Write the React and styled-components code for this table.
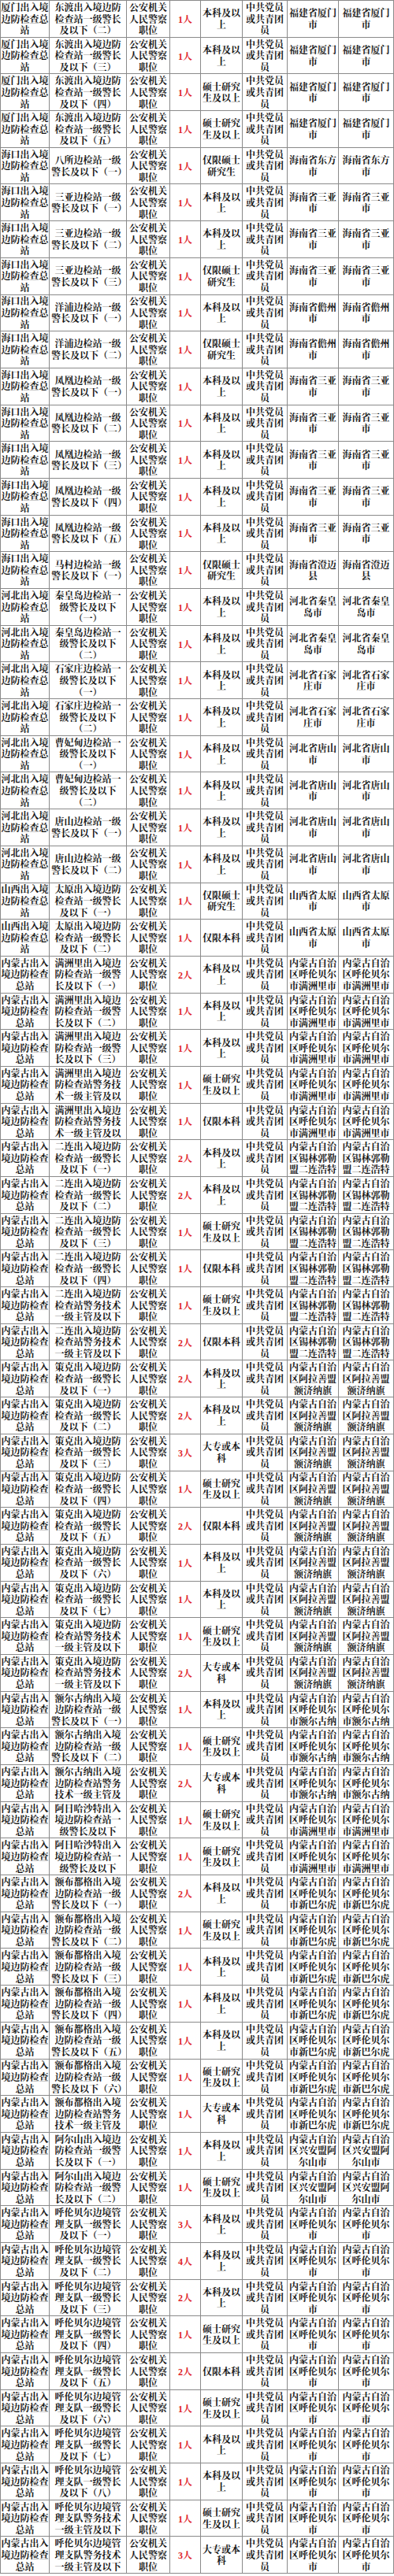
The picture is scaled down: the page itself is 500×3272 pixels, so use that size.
import React from "react";
import styled, { createGlobalStyle } from "styled-components";

const GlobalStyle = createGlobalStyle`
  html, body {
    margin: 0;
    padding: 0;
    background: #fff;
  }
`;

const Sheet = styled.div`
  display: grid;
  grid-template-columns: 62px 98px 55px 39px 53px 57px 65px 70px;
  grid-auto-rows: 46.7px;
  width: 500px;
  box-sizing: border-box;
  border-top: 1px solid #8a8a8a;
  border-left: 1px solid #8a8a8a;
  font-family: "Noto Serif CJK SC", "Noto Sans CJK SC", serif;
  font-size: 12px;
  font-weight: 700;
  color: #161616;
  background: #fff;
`;

const Cell = styled.div`
  display: flex;
  align-items: center;
  justify-content: center;
  box-sizing: border-box;
  border-right: 1px solid #8a8a8a;
  border-bottom: 1px solid #8a8a8a;
  padding: 0 ${(p) => (p.$tight ? 0 : 2)}px;
  overflow: hidden;
  text-align: center;
`;

// three lines at most, like the clipped cells of the source sheet
const Text = styled.div`
  line-height: 14.6px;
  padding: 1.5px 0;
  max-height: 43.8px;
  overflow: hidden;
  word-break: break-all;
`;

const Count = styled.span`
  color: #e0242b;
  font-family: "Liberation Serif", "Noto Serif CJK SC", "Noto Sans CJK SC", serif;
  font-size: 12px;
  font-weight: 700;
`;

const XM = "厦门出入境边防检查总站";
const HK = "海口出入境边防检查总站";
const HB = "河北出入境边防检查总站";
const SX = "山西出入境边防检查总站";
const NM = "内蒙古出入境边防检查总站";

const BK = "本科及以上";
const SS = "硕士研究生及以上";
const XS = "仅限硕士研究生";
const OB = "仅限本科";
const DZ = "大专或本科";

const jz = (s, n) => `${s}一级警长及以下${n ? `（${n}）` : ""}`;
const js = (s, n) => `${s}警务技术一级主管及以下（${n}）`;

const MZL = "内蒙古自治区呼伦贝尔市满洲里市";
const ELH = "内蒙古自治区锡林郭勒盟二连浩特市";
const EJN = "内蒙古自治区阿拉善盟额济纳旗";
const EEGN = "内蒙古自治区呼伦贝尔市额尔古纳市";
const XBEH = "内蒙古自治区呼伦贝尔市新巴尔虎左旗";
const AES = "内蒙古自治区兴安盟阿尔山市";
const HLBE = "内蒙古自治区呼伦贝尔市";

const rows = [
  [XM, jz("东渡出入境边防检查站", "二"), 1, BK, "福建省厦门市"],
  [XM, jz("东渡出入境边防检查站", "三"), 1, BK, "福建省厦门市"],
  [XM, jz("东渡出入境边防检查站", "四"), 1, SS, "福建省厦门市"],
  [XM, jz("东渡出入境边防检查站", "五"), 1, SS, "福建省厦门市"],
  [HK, jz("八所边检站", "一"), 1, XS, "海南省东方市"],
  [HK, jz("三亚边检站", "一"), 1, BK, "海南省三亚市"],
  [HK, jz("三亚边检站", "二"), 1, BK, "海南省三亚市"],
  [HK, jz("三亚边检站", "三"), 1, XS, "海南省三亚市"],
  [HK, jz("洋浦边检站", "一"), 1, BK, "海南省儋州市"],
  [HK, jz("洋浦边检站", "二"), 1, XS, "海南省儋州市"],
  [HK, jz("凤凰边检站", "一"), 1, BK, "海南省三亚市"],
  [HK, jz("凤凰边检站", "二"), 1, BK, "海南省三亚市"],
  [HK, jz("凤凰边检站", "三"), 1, BK, "海南省三亚市"],
  [HK, jz("凤凰边检站", "四"), 1, BK, "海南省三亚市"],
  [HK, jz("凤凰边检站", "五"), 1, BK, "海南省三亚市"],
  [HK, jz("马村边检站", "一"), 1, XS, "海南省澄迈县"],
  [HB, jz("秦皇岛边检站", "一"), 1, BK, "河北省秦皇岛市"],
  [HB, jz("秦皇岛边检站", "二"), 1, BK, "河北省秦皇岛市"],
  [HB, jz("石家庄边检站", "一"), 1, BK, "河北省石家庄市"],
  [HB, jz("石家庄边检站", "二"), 1, BK, "河北省石家庄市"],
  [HB, jz("曹妃甸边检站", "一"), 1, BK, "河北省唐山市"],
  [HB, jz("曹妃甸边检站", "二"), 1, BK, "河北省唐山市"],
  [HB, jz("唐山边检站", "一"), 1, BK, "河北省唐山市"],
  [HB, jz("唐山边检站", "二"), 1, BK, "河北省唐山市"],
  [SX, jz("太原出入境边防检查站", "一"), 1, XS, "山西省太原市"],
  [SX, jz("太原出入境边防检查站", "二"), 1, OB, "山西省太原市"],
  [NM, jz("满洲里出入境边防检查站", "一"), 2, BK, MZL],
  [NM, jz("满洲里出入境边防检查站", "二"), 1, BK, MZL],
  [NM, jz("满洲里出入境边防检查站", "三"), 1, BK, MZL],
  [NM, js("满洲里出入境边防检查站", "一"), 1, SS, MZL],
  [NM, js("满洲里出入境边防检查站", "二"), 1, OB, MZL],
  [NM, jz("二连出入境边防检查站", "一"), 2, BK, ELH],
  [NM, jz("二连出入境边防检查站", "二"), 2, BK, ELH],
  [NM, jz("二连出入境边防检查站", "三"), 1, SS, ELH],
  [NM, jz("二连出入境边防检查站", "四"), 1, OB, ELH],
  [NM, js("二连出入境边防检查站", "一"), 1, SS, ELH],
  [NM, js("二连出入境边防检查站", "二"), 2, OB, ELH],
  [NM, jz("策克出入境边防检查站", "一"), 2, BK, EJN],
  [NM, jz("策克出入境边防检查站", "二"), 2, BK, EJN],
  [NM, jz("策克出入境边防检查站", "三"), 3, DZ, EJN],
  [NM, jz("策克出入境边防检查站", "四"), 1, SS, EJN],
  [NM, jz("策克出入境边防检查站", "五"), 2, OB, EJN],
  [NM, jz("策克出入境边防检查站", "六"), 1, BK, EJN],
  [NM, jz("策克出入境边防检查站", "七"), 1, BK, EJN],
  [NM, js("策克出入境边防检查站", "一"), 1, SS, EJN],
  [NM, js("策克出入境边防检查站", "二"), 2, DZ, EJN],
  [NM, jz("额尔古纳出入境边防检查站", "一"), 1, BK, EEGN],
  [NM, jz("额尔古纳出入境边防检查站", "二"), 1, SS, EEGN],
  [NM, js("额尔古纳出入境边防检查站", "一"), 2, DZ, EEGN],
  [NM, jz("阿日哈沙特出入境边防检查站", "一"), 1, SS, MZL],
  [NM, jz("阿日哈沙特出入境边防检查站", "二"), 1, SS, MZL],
  [NM, jz("额布都格出入境边防检查站", "一"), 2, BK, XBEH],
  [NM, jz("额布都格出入境边防检查站", "二"), 1, SS, XBEH],
  [NM, jz("额布都格出入境边防检查站", "三"), 1, BK, XBEH],
  [NM, jz("额布都格出入境边防检查站", "四"), 1, BK, XBEH],
  [NM, jz("额布都格出入境边防检查站", "五"), 1, BK, XBEH],
  [NM, jz("额布都格出入境边防检查站", "六"), 1, SS, XBEH],
  [NM, js("额布都格出入境边防检查站", "一"), 1, DZ, XBEH],
  [NM, jz("阿尔山出入境边防检查站", "一"), 1, BK, AES],
  [NM, jz("阿尔山出入境边防检查站", "二"), 1, SS, AES],
  [NM, jz("呼伦贝尔边境管理支队", "一"), 3, BK, HLBE],
  [NM, jz("呼伦贝尔边境管理支队", "二"), 4, BK, HLBE],
  [NM, jz("呼伦贝尔边境管理支队", "三"), 2, BK, HLBE],
  [NM, jz("呼伦贝尔边境管理支队", "四"), 1, SS, HLBE],
  [NM, jz("呼伦贝尔边境管理支队", "五"), 2, OB, HLBE],
  [NM, jz("呼伦贝尔边境管理支队", "六"), 1, SS, HLBE],
  [NM, jz("呼伦贝尔边境管理支队", "七"), 1, BK, HLBE],
  [NM, jz("呼伦贝尔边境管理支队", "八"), 1, BK, HLBE],
  [NM, js("呼伦贝尔边境管理支队", "一"), 1, SS, HLBE],
  [NM, js("呼伦贝尔边境管理支队", "二"), 3, DZ, HLBE],
];

const App = () => {
  return (
    <>
      <GlobalStyle />
      <Sheet>
        {rows.map(([org, post, n, edu, place], i) => (
          <React.Fragment key={i}>
            <Cell $tight>
              <Text>{org}</Text>
            </Cell>
            <Cell>
              <Text>{post}</Text>
            </Cell>
            <Cell>
              <Text>公安机关人民警察职位</Text>
            </Cell>
            <Cell>
              <Count>{n}人</Count>
            </Cell>
            <Cell>
              <Text>{edu}</Text>
            </Cell>
            <Cell>
              <Text>中共党员或共青团员</Text>
            </Cell>
            <Cell>
              <Text>{place}</Text>
            </Cell>
            <Cell>
              <Text>{place}</Text>
            </Cell>
          </React.Fragment>
        ))}
      </Sheet>
    </>
  );
};

export default App;
